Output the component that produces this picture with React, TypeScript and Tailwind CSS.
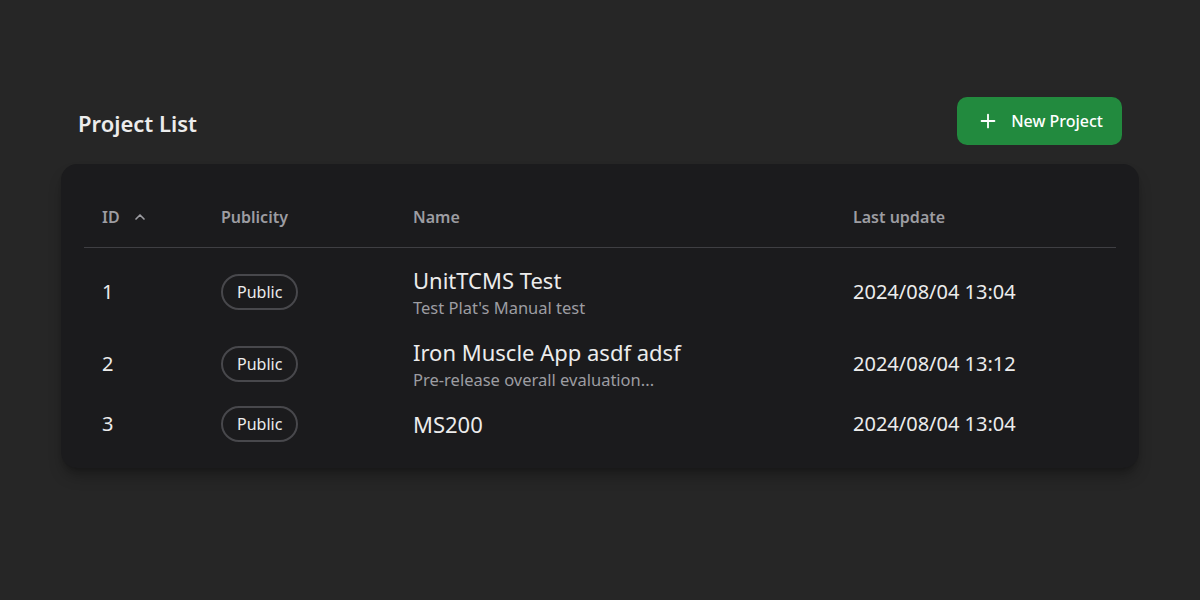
import { ChevronUp, Plus } from "lucide-react"

type Project = {
  id: number
  publicity: string
  name: string
  description?: string
  updatedAt: string
}

const projects: Project[] = [
  {
    id: 1,
    publicity: "Public",
    name: "UnitTCMS Test",
    description: "Test Plat's Manual test",
    updatedAt: "2024/08/04 13:04",
  },
  {
    id: 2,
    publicity: "Public",
    name: "Iron Muscle App asdf adsf",
    description: "Pre-release overall evaluation...",
    updatedAt: "2024/08/04 13:12",
  },
  {
    id: 3,
    publicity: "Public",
    name: "MS200",
    updatedAt: "2024/08/04 13:04",
  },
]

export default function App() {
  return (
    <div
      className="min-h-[600px] w-full bg-[#262626] text-[#ececec] px-[61px] pt-[97px]"
      style={{ fontFamily: '"Noto Sans", "Open Sans", sans-serif' }}
    >
      <div className="flex items-center justify-between pl-[17px] pr-[17px]">
        <h1 className="pt-[4px] text-[22px] font-semibold text-[#ececec]">Project List</h1>
        <button className="flex items-center gap-3 h-12 pl-5 pr-[19px] rounded-[10px] bg-[#228a3e] text-white text-[16px] font-medium">
          <Plus size={22} strokeWidth={2} />
          New Project
        </button>
      </div>

      <div className="mt-[19px] rounded-2xl bg-[#1b1b1d] px-[23px] pt-[26px] pb-[20px] shadow-lg shadow-black/30">
        <div className="flex items-center h-[58px] pb-[3px] border-b border-[#3f3f43] text-[16px] font-semibold text-[#9d9da2]">
          <div className="w-[137px] pl-[18px] flex items-center gap-3">
            ID
            <ChevronUp size={16} strokeWidth={2.5} />
          </div>
          <div className="w-[192px]">Publicity</div>
          <div className="w-[440px]">Name</div>
          <div>Last update</div>
        </div>

        <div className="pt-[8px]">
          {projects.map((p) => (
            <div
              key={p.id}
              className={`flex items-center ${p.description ? "h-[72px]" : "h-[48px]"}`}
            >
              <div className="w-[137px] pl-[18px] text-[20px]">{p.id}</div>
              <div className="w-[192px]">
                <span className="inline-flex items-center h-9 px-[14px] rounded-full border-2 border-[#48484c] text-[16px]">
                  {p.publicity}
                </span>
              </div>
              <div className="w-[440px] flex flex-col">
                <span className="text-[22px] leading-[32px]">{p.name}</span>
                {p.description && (
                  <span className="text-[16.5px] leading-6 text-[#9d9da2]">{p.description}</span>
                )}
              </div>
              <div className="text-[20px]">{p.updatedAt}</div>
            </div>
          ))}
        </div>
      </div>
    </div>
  )
}
